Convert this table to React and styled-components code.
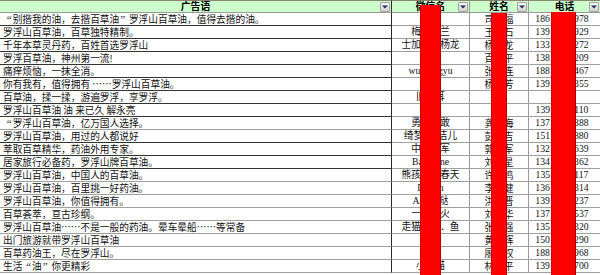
import React from 'react';
import styled, { createGlobalStyle } from 'styled-components';

const GlobalStyle = createGlobalStyle`
  html, body {
    margin: 0;
    padding: 0;
    background: #ffffff;
  }
  body {
    font-family: "Noto Sans CJK SC", "Liberation Sans", sans-serif;
    color: #111;
  }
`;

const Sheet = styled.div`
  position: relative;
  width: 600px;
  height: 275px;
  overflow: hidden;
  display: grid;
  grid-template-columns: 392px 78px 59px 71px;
  grid-auto-rows: 13px;
  background: #fff;
`;

const colBorder = {
  a: '1px solid #2a2a2a',
  b: '1px solid #9a9a9a',
  c: '1px solid #9a9a9a',
  d: 'none',
};

const HeadCell = styled.div`
  box-sizing: border-box;
  background: #ccffcc;
  border-top: 1px solid #8c8470;
  border-bottom: 1px solid #9a9a9a;
  border-right: ${(p) => colBorder[p.$col]};
  display: grid;
  grid-template-columns: 11px 1fr 11px;
  align-items: center;
  font-size: 9.8px;
  font-weight: 700;
  line-height: 11px;
  color: #000;
`;

const HeadText = styled.span`
  grid-column: 2;
  text-align: center;
  white-space: nowrap;
`;

const FilterButton = styled.span`
  grid-column: 3;
  box-sizing: border-box;
  width: 10px;
  height: 10px;
  display: flex;
  align-items: center;
  justify-content: center;
  background: linear-gradient(#f6f6f6, #d4d2cc);
  border: 1px solid #a4a4a4;
  border-radius: 1px;
`;

const lineColor = {
  dark: '#333333',
  gray: '#a0a0a0',
};

const Cell = styled.div`
  box-sizing: border-box;
  border-right: ${(p) => colBorder[p.$col]};
  border-bottom: 1px solid ${(p) => (p.$col === 'a' ? lineColor[p.$line] : '#a0a0a0')};
  font-size: 9.7px;
  line-height: 12px;
  white-space: nowrap;
  overflow: ${(p) => (p.$col === 'a' ? 'visible' : 'hidden')};
  text-align: ${(p) => (p.$col === 'a' ? 'left' : 'center')};
  padding: ${(p) => (p.$col === 'a' ? '0 0 0 3px' : p.$col === 'd' ? '0 5px 0 0' : '0')};
  font-family: ${(p) =>
    p.$col === 'd' || p.$col === 'b'
      ? '"Liberation Serif", "Noto Sans CJK SC", serif'
      : '"Noto Sans CJK SC", "Liberation Sans", sans-serif'};
`;

// full-width quote box, like the sheet's song-style font
const Quote = styled.span`
  display: inline-block;
  width: 9.7px;
  font-family: "Liberation Serif", serif;
  font-size: 11px;
  line-height: 12px;
  text-align: ${(p) => (p.$open ? 'right' : 'left')};
  padding: ${(p) => (p.$open ? '0 1px 0 0' : '0 0 0 1px')};
  box-sizing: border-box;
`;

const Redaction = styled.div`
  position: absolute;
  box-sizing: border-box;
  bottom: 0;
  background: #ff0000;
  border-left: 1px solid #d00000;
  border-right: 1px solid #b00000;
`;

const rows = [
  { ad: '“别揩我的油，去揩百草油”罗浮山百草油，值得去揩的油。', wx: '', name: '司马福', tel: '18612345978', line: 'dark' },
  { ad: '罗浮山百草油，百草独特精制。', wx: '梅竹菊兰', name: '王小石', tel: '13912345929', line: 'dark' },
  { ad: '千年本草灵丹药，百姓首选罗浮山', wx: '士加之子杨龙', name: '杨小龙', tel: '13312345272', line: 'dark' },
  { ad: '罗浮百草油，神州第一流!', wx: '', name: '百里平', tel: '13812345209', line: 'dark' },
  { ad: '痛痒烦恼，一抹全消。', wx: 'wushengyu', name: '张志连', tel: '18812345467', line: 'dark' },
  { ad: '你有我有，值得拥有 ……罗浮山百草油。', wx: '', name: '杨晓芳', tel: '13912345355', line: 'dark' },
  { ad: '百草油，揉一揉，游遍罗浮，享罗浮。', wx: '旧时耳', name: '', tel: '', line: 'dark' },
  { ad: '罗浮山百草油 油 来已久 解永亮', wx: '', name: '', tel: '13912345110', line: 'dark' },
  { ad: '“罗浮山百草油，亿万国人选择。', wx: '勇气果敢', name: '龚大海', tel: '13712345388', line: 'gray' },
  { ad: '罗浮山百草油，用过的人都说好', wx: '绮梦依*洁儿', name: '彭小吉', tel: '15112345880', line: 'dark' },
  { ad: '萃取百草精华，药油外用专家。', wx: '中国将军', name: '郭建军', tel: '13212345639', line: 'dark' },
  { ad: '居家旅行必备药，罗浮山牌百草油。', wx: 'Balentine', name: '刘明星', tel: '13412345362', line: 'dark' },
  { ad: '罗浮山百草油，中国人的百草油。', wx: '熊孩子的春天', name: '许家鸣', tel: '13512345117', line: 'gray' },
  { ad: '罗浮山百草油，百里挑一好药油。', wx: 'Lanish', name: '李小健', tel: '13612345314', line: 'gray' },
  { ad: '罗浮山百草油，你值得拥有。', wx: 'A小萌哒', name: '洪子晋', tel: '13912345237', line: 'gray' },
  { ad: '百草荟萃，亘古珍纲。', wx: '一把烈火', name: '刘少华', tel: '13712345537', line: 'gray' },
  { ad: '罗浮山百草油……不是一般的药油。晕车晕船……等常备', wx: '走猫和猫．鱼', name: '张家强', tel: '13512345320', line: 'gray' },
  { ad: '出门旅游就带罗浮山百草油', wx: '', name: '黄志辉', tel: '15012345290', line: 'gray' },
  { ad: '百草药油王，尽在罗浮山。', wx: '', name: '廖永权', tel: '18812345968', line: 'gray' },
  { ad: '生活“油”你更精彩', wx: '小花猫', name: '林小平', tel: '13912345700', line: 'gray' },
];

const headers = [
  { col: 'a', label: '广告语' },
  { col: 'b', label: '微信名' },
  { col: 'c', label: '姓名' },
  { col: 'd', label: '电话' },
];

const redactions = [
  { left: 420, top: 5, width: 21 },
  { left: 491, top: 13, width: 16 },
  { left: 551, top: 12, width: 25 },
];

function AdText({ text }) {
  const parts = text.split(/([“”])/);
  return parts.map((part, i) =>
    part === '“' || part === '”' ? (
      <Quote key={i} $open={part === '“'}>{part}</Quote>
    ) : (
      part
    )
  );
}

function DropArrow() {
  return (
    <svg width="6" height="4" viewBox="0 0 6 4">
      <path d="M0 0.5 H6 L3 3.5 Z" fill="#1f2f5c" />
    </svg>
  );
}

export default function App() {
  return (
    <>
      <GlobalStyle />
      <Sheet>
        {headers.map((h) => (
          <HeadCell key={h.col} $col={h.col}>
            <HeadText>{h.label}</HeadText>
            <FilterButton>
              <DropArrow />
            </FilterButton>
          </HeadCell>
        ))}
        {rows.map((r, i) => (
          <React.Fragment key={i}>
            <Cell $col="a" $line={r.line}>
              <AdText text={r.ad} />
            </Cell>
            <Cell $col="b">{r.wx}</Cell>
            <Cell $col="c">{r.name}</Cell>
            <Cell $col="d">{r.tel}</Cell>
          </React.Fragment>
        ))}
        {redactions.map((b, i) => (
          <Redaction key={i} style={{ left: b.left, top: b.top, width: b.width }} />
        ))}
      </Sheet>
    </>
  );
}
